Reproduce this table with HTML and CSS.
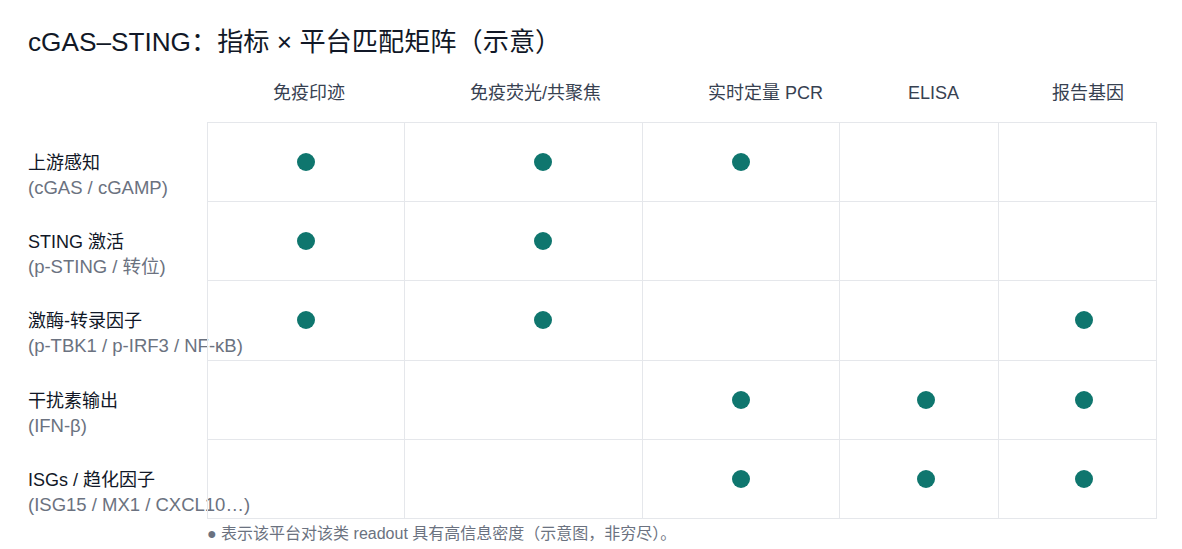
FILE: index.html
```html
<!DOCTYPE html>
<html lang="zh-CN">
<head>
<meta charset="utf-8">
<title>cGAS–STING 指标 × 平台匹配矩阵</title>
<link rel="stylesheet" href="styles.css">
</head>
<body>
<div class="page">
  <h1 class="title">cGAS–STING：指标 × 平台匹配矩阵（示意）</h1>
  <div class="head-row">
    <div class="spacer"></div>
    <div class="hd h1c">免疫印迹</div>
    <div class="hd h2c">免疫荧光/共聚焦</div>
    <div class="hd h3c">实时定量 PCR</div>
    <div class="hd h4c">ELISA</div>
    <div class="hd h5c">报告基因</div>
  </div>
  <div class="body-row">
    <div class="labels">
      <div class="label"><div class="main">上游感知</div><div class="sub">(cGAS / cGAMP)</div></div>
      <div class="label"><div class="main">STING 激活</div><div class="sub">(p-STING / 转位)</div></div>
      <div class="label"><div class="main">激酶-转录因子</div><div class="sub">(p-TBK1 / p-IRF3 / NF-κB)</div></div>
      <div class="label"><div class="main">干扰素输出</div><div class="sub">(IFN-β)</div></div>
      <div class="label"><div class="main">ISGs / 趋化因子</div><div class="sub">(ISG15 / MX1 / CXCL10…)</div></div>
    </div>
    <div class="matrix">
      <div class="cell c1"><span class="dot"></span></div>
      <div class="cell c2"><span class="dot"></span></div>
      <div class="cell c3"><span class="dot"></span></div>
      <div class="cell c4"></div>
      <div class="cell c5"></div>

      <div class="cell c1"><span class="dot"></span></div>
      <div class="cell c2"><span class="dot"></span></div>
      <div class="cell c3"></div>
      <div class="cell c4"></div>
      <div class="cell c5"></div>

      <div class="cell c1"><span class="dot"></span></div>
      <div class="cell c2"><span class="dot"></span></div>
      <div class="cell c3"></div>
      <div class="cell c4"></div>
      <div class="cell c5"><span class="dot"></span></div>

      <div class="cell c1"></div>
      <div class="cell c2"></div>
      <div class="cell c3"><span class="dot"></span></div>
      <div class="cell c4"><span class="dot"></span></div>
      <div class="cell c5"><span class="dot"></span></div>

      <div class="cell c1"></div>
      <div class="cell c2"></div>
      <div class="cell c3"><span class="dot"></span></div>
      <div class="cell c4"><span class="dot"></span></div>
      <div class="cell c5"><span class="dot"></span></div>
    </div>
  </div>
  <p class="note">● 表示该平台对该类 readout 具有高信息密度（示意图，非穷尽）。</p>
</div>
</body>
</html>
```

FILE: styles.css
```css
* { box-sizing: border-box; }

html, body {
  margin: 0;
  padding: 0;
  background: #ffffff;
}

body {
  font-family: "Liberation Sans", "Noto Sans CJK SC", Arial, sans-serif;
  color: #111827;
}

.page {
  padding: 24px 0 0 28px;
}

.title {
  margin: 0;
  font-size: 26.2px;
  line-height: 36px;
  font-weight: 400;
  color: #111827;
}

.head-row {
  display: grid;
  grid-template-columns: 179px 197px 238px 197px 159px 158px;
  margin-top: 21px;
  height: 24px;
}

.hd {
  font-size: 18px;
  line-height: 24px;
  color: #374151;
  white-space: nowrap;
}

.h1c { padding-left: 66px; }
.h2c { padding-left: 66px; }
.h3c { padding-left: 66px; }
.h4c { padding-left: 69px; }
.h5c { padding-left: 54px; }

.body-row {
  display: flex;
  margin-top: 17px;
}

.labels {
  width: 179px;
  padding-top: 1px;
  display: grid;
  grid-auto-rows: 79.2px;
}

.label {
  padding-top: 28px;
  white-space: nowrap;
}

.main {
  font-size: 18px;
  line-height: 25px;
  color: #111827;
}

.sub {
  font-size: 18.5px;
  line-height: 24px;
  color: #6b7280;
}

.matrix {
  display: grid;
  grid-template-columns: 197px 238px 197px 159px 158px;
  grid-auto-rows: 79.2px;
  border-top: 1px solid #e5e7eb;
  border-left: 1px solid #e5e7eb;
}

.cell {
  border-right: 1px solid #e5e7eb;
  border-bottom: 1px solid #e5e7eb;
  display: flex;
  align-items: center;
}

.c1 { padding-left: 89px; }
.c2 { padding-left: 129px; }
.c3 { padding-left: 89px; }
.c4 { padding-left: 77px; }
.c5 { padding-left: 76px; }

.dot {
  width: 18px;
  height: 18px;
  border-radius: 50%;
  background: #0f766e;
}

.note {
  margin: 5px 0 0 179px;
  font-size: 16px;
  line-height: 20px;
  color: #6b7280;
}
```
